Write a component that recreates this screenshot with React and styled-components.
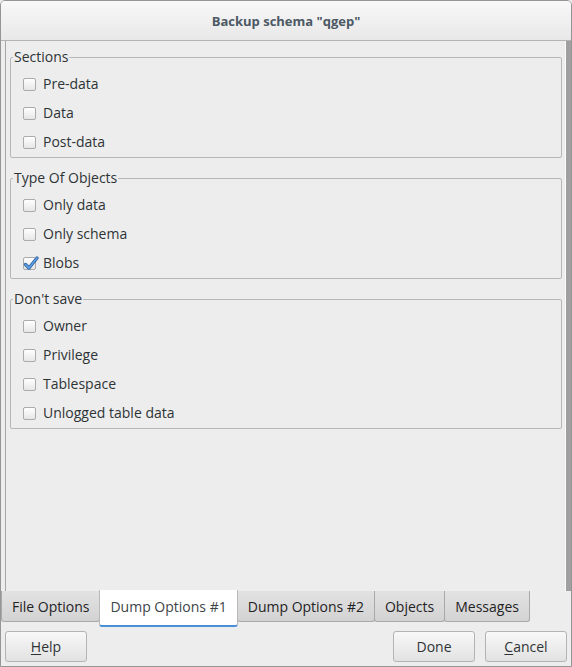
import styled, { createGlobalStyle } from 'styled-components'

const GROUPS = [
    { title: 'Sections', items: [['Pre-data'], ['Data'], ['Post-data']] },
    { title: 'Type Of Objects', items: [['Only data'], ['Only schema'], ['Blobs', true]] },
    { title: "Don't save", items: [['Owner'], ['Privilege'], ['Tablespace'], ['Unlogged table data']] },
]

const TABS = ['File Options', 'Dump Options #1', 'Dump Options #2', 'Objects', 'Messages']

const GlobalStyle = createGlobalStyle`
    body {
        margin: 0;
        background: #ededed;
        font-family: "Open Sans", "DejaVu Sans", sans-serif;
    }
`

const Window = styled.div`
    width: 572px;
    height: 667px;
    box-sizing: border-box;
    border: 1px solid #959595;
    border-radius: 5px 5px 0 0;
    background: #ededed;
    display: flex;
    flex-direction: column;
    overflow: hidden;
    font-size: 14px;
    color: #2e3436;
`

const TitleBar = styled.div`
    height: 38px;
    flex: none;
    border-bottom: 1px solid #b4b4b4;
    background: linear-gradient(#f8f8f8, #e8e8e8);
    display: flex;
    align-items: center;
    justify-content: center;
    font-size: 13px;
    font-weight: 700;
    color: #4c5964;
    padding-top: 1px;
`

const Body = styled.div`
    flex: 1;
    display: flex;
    padding-left: 4px;
`

const Panel = styled.div`
    flex: 1;
    border-left: 1px solid #a6a6a6;
    border-right: 5px solid #a0a0a0;
    box-shadow: inset -1px 0 #fbfbfb;
    padding: 8px 4px 0 4px;
    display: flex;
    flex-direction: column;
    gap: 12px;
`

const Group = styled.fieldset`
    margin: 0;
    padding: 4px 12px 1px 12px;
    border: 1px solid #b7b7b7;
    border-radius: 2px;
    min-width: 0;
`

const Legend = styled.legend`
    padding: 0 1px;
    margin-left: -10px;
    line-height: 16px;
    color: #2e3436;
`

const Row = styled.label`
    height: 29px;
    display: flex;
    align-items: center;
    gap: 7px;
`

const Box = styled.span`
    position: relative;
    width: 13px;
    height: 13px;
    box-sizing: border-box;
    border: 1px solid #ababab;
    border-radius: 2px;
    background: linear-gradient(#ffffff, #e6e6e6);
    flex: none;
    margin-top: 1px;

    svg {
        position: absolute;
        left: -1px;
        top: -3px;
    }
`

const TabBar = styled.div`
    height: 36px;
    flex: none;
    display: flex;
    align-items: flex-start;
    padding-left: 1px;
`

const Tab = styled.div`
    box-sizing: border-box;
    height: 31px;
    padding: 0 10px;
    display: flex;
    align-items: center;
    border: 1px solid #a9a9a9;
    border-top: none;
    border-radius: 0 0 3px 3px;
    margin-left: -1px;
    background: linear-gradient(#e2e2e2, #d3d3d3);
    color: #1f2324;
    ${p => p.active && `
        background: #ffffff;
        color: #3d4548;
        padding: 0 10px 3px;
        border-color: #b9b9b9;
        border-bottom: 2px solid #4a90d9;
        position: relative;
        z-index: 1;
        margin-top: -1px;
        height: 37px;
    `}
`

const ButtonRow = styled.div`
    flex: none;
    height: 39px;
    box-sizing: border-box;
    padding: 4px;
    display: flex;
    gap: 10px;
`

const Button = styled.button`
    width: 82px;
    height: 31px;
    border: 1px solid #b3b3b3;
    border-radius: 3px;
    background: linear-gradient(#f8f8f8, #e2e2e2);
    font-family: inherit;
    font-size: 14px;
    color: #2e3436;
    padding: 0;
    margin-left: ${p => p.push ? 'auto' : '0'};

    u {
        text-decoration-thickness: 1px;
        text-underline-offset: 2px;
    }
`

function Check({ checked }) {
    return (
        <Box>
            {checked && (
                <svg width="16" height="16" viewBox="0 0 16 16">
                    <path d="M2.5 9.5 L6 13 L14 3" fill="none" stroke="#2a5d9a" strokeWidth="3.2" strokeLinecap="round" strokeLinejoin="round" />
                    <path d="M2.5 9.5 L6 13 L14 3" fill="none" stroke="#5d9de3" strokeWidth="1.8" strokeLinecap="round" strokeLinejoin="round" />
                </svg>
            )}
        </Box>
    )
}

export default function App() {
    return (
        <Window>
            <GlobalStyle />
            <TitleBar>Backup schema "qgep"</TitleBar>
            <Body>
                <Panel>
                    {GROUPS.map(g => (
                        <Group key={g.title}>
                            <Legend>{g.title}</Legend>
                            {g.items.map(([name, checked]) => (
                                <Row key={name}>
                                    <Check checked={checked} />
                                    {name}
                                </Row>
                            ))}
                        </Group>
                    ))}
                </Panel>
            </Body>
            <TabBar>
                {TABS.map(t => (
                    <Tab key={t} active={t === 'Dump Options #1'}>{t}</Tab>
                ))}
            </TabBar>
            <ButtonRow>
                <Button><u>H</u>elp</Button>
                <Button push>Done</Button>
                <Button><u>C</u>ancel</Button>
            </ButtonRow>
        </Window>
    )
}
